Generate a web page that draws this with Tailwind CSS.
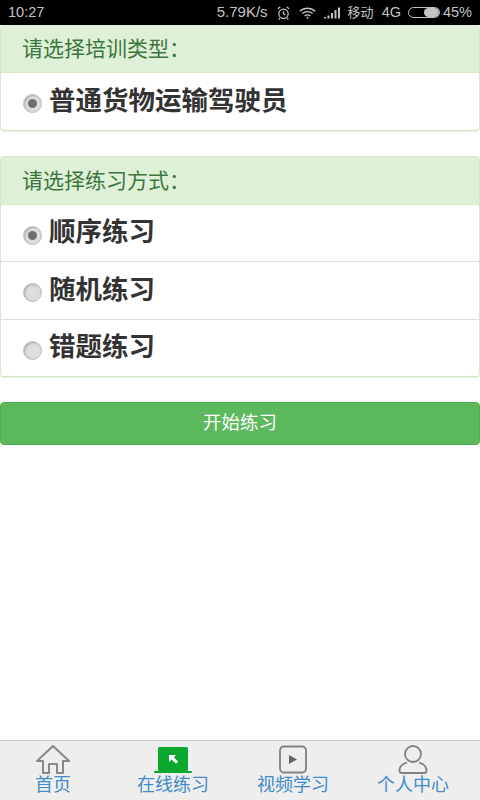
<!DOCTYPE html>
<html lang="zh">
  <head>
    <meta charset="UTF-8" />
    <title>练习</title>
    <script src="https://cdn.jsdelivr.net/npm/@tailwindcss/browser@4"></script>
  </head>
  <body class="bg-white">
    <div class="w-[480px] h-[800px] flex flex-col overflow-hidden font-['Liberation_Sans','Noto_Sans_CJK_SC',sans-serif]">
      <!-- 状态栏 -->
      <div class="h-[25px] bg-black text-[#c4c4c4] text-[14.5px] flex items-center pl-2 pr-2 shrink-0">
        <span>10:27</span>
        <span class="ml-auto text-[15px]">5.79K/s</span>
        <svg class="ml-[8px] w-[15px] h-[16px]" viewBox="0 0 16 16" fill="none" stroke="#c4c4c4" stroke-width="1.300">
          <circle cx="8" cy="8.800" r="5"/><path d="M8 6v3l2 1M2 3.500 4.500 1.500M14 3.500 11.500 1.500M4 13.500l-1 1.500M12 13.500l1 1.500"/>
        </svg>
        <svg class="ml-[8px] w-[17px] h-[14px]" viewBox="0 0 18 14" fill="none" stroke="#c4c4c4" stroke-width="1.500">
          <path d="M1 5c4.500-4 11.500-4 16 0M3.500 7.500c3-2.600 8-2.600 11 0M6 10c1.600-1.300 4.400-1.300 6 0"/><circle cx="9" cy="12" r="1" fill="#c4c4c4" stroke="none"/>
        </svg>
        <svg class="ml-[8px] w-[17px] h-[12px]" viewBox="0 0 17 12" fill="#c4c4c4">
          <rect x="0" y="10" width="2" height="1.500"/><rect x="3.500" y="8.500" width="2" height="3"/><rect x="7" y="6" width="2" height="5.500"/><rect x="10.500" y="3" width="2" height="8.500"/><rect x="14" y="0.500" width="2" height="11"/>
        </svg>
        <span class="ml-[7px] text-[13px]">移动</span>
        <span class="ml-[8px]">4G</span>
        <div class="ml-[7px] w-[32px] h-[11px] rounded-full border border-[#c4c4c4] flex justify-end">
          <div class="w-[15px] h-full rounded-full bg-[#c4c4c4]"></div>
        </div>
        <span class="ml-[3px]">45%</span>
      </div>

      <!-- 培训类型 -->
      <div class="border border-t-0 border-[#d6e9c6] rounded-[4px] shadow-[0_1px_1px_#e6f2e0] bg-white">
        <div class="h-[48px] bg-[#dff0d8] text-[#3c763d] text-[21px] flex items-center pl-[21px] border-b border-[#d6e9c6]">请选择培训类型：</div>
        <div class="h-[57px] flex items-center pl-[22px] gap-[7px]">
          <span class="mt-[4px] w-[19px] h-[19px] rounded-full bg-[#dedede] border border-[#bdbdbd] shadow-[inset_1px_1px_2px_#aaa] flex items-center justify-center"><span class="w-[9px] h-[9px] rounded-full bg-[#6e6e6e]"></span></span>
          <span class="text-[26.500px] leading-[34px] -mt-[2px] font-bold text-[#333]">普通货物运输驾驶员</span>
        </div>
      </div>

      <!-- 练习方式 -->
      <div class="mt-[25px] border border-[#d6e9c6] rounded-[4px] shadow-[0_1px_1px_#e6f2e0] bg-white">
        <div class="h-[48px] bg-[#dff0d8] text-[#3c763d] text-[21px] flex items-center pl-[21px] border-b border-[#d6e9c6]">请选择练习方式：</div>
        <div class="h-[57px] flex items-center pl-[22px] gap-[7px] border-b border-[#ddd]">
          <span class="mt-[4px] w-[19px] h-[19px] rounded-full bg-[#dedede] border border-[#bdbdbd] shadow-[inset_1px_1px_2px_#aaa] flex items-center justify-center"><span class="w-[9px] h-[9px] rounded-full bg-[#6e6e6e]"></span></span>
          <span class="text-[26.500px] leading-[34px] -mt-[2px] font-bold text-[#333]">顺序练习</span>
        </div>
        <div class="h-[58px] flex items-center pl-[22px] gap-[7px] border-b border-[#ddd]">
          <span class="mt-[4px] w-[19px] h-[19px] rounded-full bg-[#dedede] border border-[#bdbdbd] shadow-[inset_1px_1px_2px_#aaa]"></span>
          <span class="text-[26.500px] leading-[34px] -mt-[2px] font-bold text-[#333]">随机练习</span>
        </div>
        <div class="h-[56px] flex items-center pl-[22px] gap-[7px]">
          <span class="mt-[4px] w-[19px] h-[19px] rounded-full bg-[#dedede] border border-[#bdbdbd] shadow-[inset_1px_1px_2px_#aaa]"></span>
          <span class="text-[26.500px] leading-[34px] -mt-[2px] font-bold text-[#333]">错题练习</span>
        </div>
      </div>

      <button class="mt-[25px] h-[43px] w-full shrink-0 bg-[#5cb85c] border border-[#4cae4c] rounded-[4px] text-white text-[18.500px] pb-[2px]">开始练习</button>

      <div class="flex-1"></div>

      <!-- 底部导航 -->
      <div class="h-[60px] shrink-0 bg-[#eeeeee] border-t border-[#c8c8c8] grid grid-cols-4 text-[#428bca] text-[18px] leading-[20px] text-center">
        <div class="flex flex-col items-center pr-[14px]">
          <svg class="mt-[4px] w-[34px] h-[29px]" viewBox="0 0 34 29" fill="none" stroke="#888" stroke-width="2" stroke-linejoin="round">
            <path d="M1 16 17 1l16 15h-6v12h-6v-9h-8v9H7V16z"/>
          </svg>
          <span class="mt-[1px]">首页</span>
        </div>
        <div class="flex flex-col items-center pr-[14px]">
          <svg class="mt-[6px] w-[38px] h-[27px]" viewBox="0 0 38 27">
            <rect x="4" y="0" width="30" height="24" rx="1.500" fill="#0aa82e"/>
            <rect x="0" y="24" width="38" height="2" rx="1" fill="#0aa82e"/>
            <path d="M15 8h7l-2.200 2.200 4.400 4.400-2.200 2.200-4.400-4.400L15 15z" fill="#fff"/>
          </svg>
          <span class="mt-[1px]">在线练习</span>
        </div>
        <div class="flex flex-col items-center pr-[14px]">
          <svg class="mt-[4px] w-[30px] h-[29px]" viewBox="0 0 30 29" fill="none">
            <rect x="2" y="1.500" width="26" height="26" rx="4" stroke="#808080" stroke-width="1.800"/>
            <path d="M11 10v9l8-4.500z" fill="#666"/>
          </svg>
          <span class="mt-[1px]">视频学习</span>
        </div>
        <div class="flex flex-col items-center pr-[14px]">
          <svg class="mt-[4px] w-[30px] h-[29px]" viewBox="0 0 30 29" fill="none" stroke="#808080" stroke-width="1.800">
            <circle cx="15" cy="9" r="8"/>
            <path d="M9 17.500C4 19 1.500 22 1.500 25.500c0 1.700 1 2.500 2.500 2.500h22c1.500 0 2.500-.8 2.500-2.500 0-3.500-2.500-6.500-7.500-8"/>
          </svg>
          <span class="mt-[1px]">个人中心</span>
        </div>
      </div>
    </div>
  </body>
</html>
